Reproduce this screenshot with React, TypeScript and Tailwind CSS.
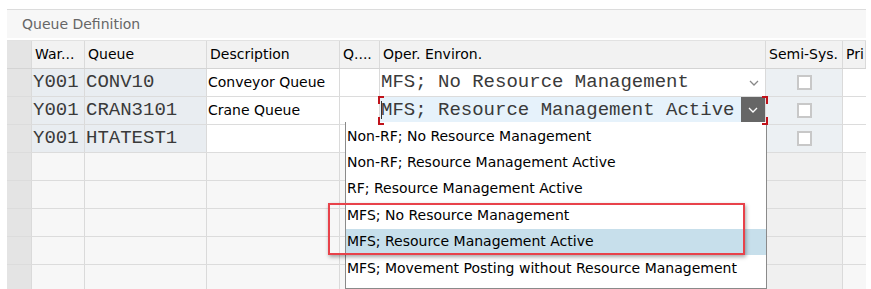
import React from "react";

const sans = "font-['DejaVu_Sans',Tahoma,sans-serif]";
const mono = "font-['Liberation_Mono','Courier_New',monospace]";

/* column widths, left to right: selector, War., Queue, Description, Q., Oper. Environ., Semi-Sys., Pri */
const cols = ["w-[25px]", "w-[53px]", "w-[122px]", "w-[133px]", "w-[40px]", "w-[386px]", "w-[77px]", "flex-1"];

type Row = { war?: string; queue?: string; desc?: string; env?: "plain" | "focus" | "blank"; check?: boolean };

const rows: Row[] = [
  { war: "Y001", queue: "CONV10", desc: "Conveyor Queue", env: "plain", check: true },
  { war: "Y001", queue: "CRAN3101", desc: "Crane Queue", env: "focus", check: true },
  { war: "Y001", queue: "HTATEST1", env: "blank", check: true },
  {}, {}, {}, {}, {},
];

const options = [
  "Non-RF; No Resource Management",
  "Non-RF; Resource Management Active",
  "RF; Resource Management Active",
  "MFS; No Resource Management",
  "MFS; Resource Management Active",
  "MFS; Movement Posting without Resource Management",
];

function Chevron({ className }: { className?: string }) {
  return (
    <svg width="10" height="6" viewBox="0 0 10 6" className={className}>
      <path d="M1 1 L5 5 L9 1" fill="none" stroke="currentColor" strokeWidth="1.3" />
    </svg>
  );
}

function Check() {
  return <div className="h-[15px] w-[15px] border-2 border-[#c8c8c8] bg-white" />;
}

function Cell({ i, className = "", children }: { i: number; className?: string; children?: React.ReactNode }) {
  return <div className={`${cols[i]} shrink-0 h-full border-r border-[#dadada] ${className}`}>{children}</div>;
}

export default function App() {
  return (
    <div className={`relative h-[289px] w-[871px] overflow-hidden bg-white ${sans}`}>
      <div className="ml-[7px] mt-[9px] w-[859px] border-t border-[#dcdcdc]">
        {/* panel title */}
        <div className="flex h-[28px] items-center bg-[#f7f7f7] pl-[15px] text-[14px] text-[#666]">Queue Definition</div>

        <div className="mt-[2px] border-t border-[#e2e2e2]">
          {/* header */}
          <div className="flex h-[28px] border-b border-[#d4d4d4] bg-[#f2f2f2] text-[14px] text-black">
            <Cell i={0} className="bg-[#e4e4e4]" />
            {["War...", "Queue", "Description", "Q....", "Oper. Environ.", "Semi-Sys.", "Pri"].map((h, k) => (
              <Cell key={h} i={k + 1} className="flex items-center overflow-hidden whitespace-nowrap pl-[3px]">{h}</Cell>
            ))}
          </div>

          {rows.map((r, idx) => {
            const filled = !!r.war;
            const key = filled ? "bg-[#e9edf1]" : "bg-[#f7f7f7]";
            const plain = filled ? "bg-white" : "bg-[#f7f7f7]";
            return (
              <div key={idx} className="flex h-[28px] border-b border-[#dcdcdc] text-[14px]">
                <Cell i={0} className="bg-[#e4e4e4]" />
                <Cell i={1} className={`${key} ${mono} flex items-center pl-[1px] text-[19px] text-[#3a3a3a]`}>{r.war}</Cell>
                <Cell i={2} className={`${key} ${mono} flex items-center pl-[1px] text-[19px] text-[#3a3a3a]`}>{r.queue}</Cell>
                <Cell i={3} className={`${plain} flex items-center pl-[1px] text-black`}>{r.desc}</Cell>
                <Cell i={4} className={plain} />
                <Cell i={5} className={`${plain} relative`}>
                  {r.env === "plain" && (
                    <div className={`flex h-full items-center justify-between pl-[1px] pr-[6px] ${mono} text-[19px] text-[#3a3a3a]`}>
                      <span>MFS; No Resource Management</span>
                      <Chevron className="text-[#888]" />
                    </div>
                  )}
                  {r.env === "focus" && (
                    <>
                      <div className={`flex h-[26px] items-center bg-[#e6f2fb] pl-[1px] ${mono} text-[19px] text-[#3a3a3a]`}>
                        <span className="mr-[1px] h-[18px] w-[1px] bg-[#333]" />
                        <span className="-ml-[2px]">MFS; Resource Management Active</span>
                        <div className="ml-auto flex h-[26px] w-[24px] items-center justify-center bg-[#666] text-white">
                          <Chevron />
                        </div>
                      </div>
                      {/* focus brackets */}
                      <div className="absolute z-10 -left-[2px] -top-[1px] h-[8px] w-[6px] border-l-2 border-t-2 border-[#c0131b]" />
                      <div className="absolute z-10 -left-[2px] -bottom-[1px] h-[8px] w-[6px] border-b-2 border-l-2 border-[#c0131b]" />
                      <div className="absolute z-10 -right-[3px] -top-[1px] h-[8px] w-[6px] border-r-2 border-t-2 border-[#c0131b]" />
                      <div className="absolute z-10 -right-[3px] -bottom-[1px] h-[8px] w-[6px] border-b-2 border-r-2 border-[#c0131b]" />
                    </>
                  )}
                </Cell>
                <Cell i={6} className={`${filled ? "bg-[#ecf0f3]" : "bg-[#f0f0f0]"} flex items-center justify-center`}>
                  {r.check && <Check />}
                </Cell>
                <Cell i={7} className={`${plain} border-r-0`} />
              </div>
            );
          })}
        </div>
      </div>

      {/* dropdown list */}
      <div className="absolute left-[345px] top-[122px] bottom-0 w-[422px] border border-t-0 border-[#8a8a8a] bg-white pt-[1px] text-[14px] text-black">
        {options.map((o, k) => (
          <div key={o} className={`flex h-[26.4px] items-center whitespace-nowrap pl-[1px] ${k === 4 ? "bg-[#c7dfeb]" : ""}`}>
            {o}
          </div>
        ))}
      </div>

      {/* highlight frame */}
      <div className="absolute left-[328px] top-[203px] h-[52px] w-[417px] border-2 border-[#e8424a] shadow-[1px_2px_4px_rgba(0,0,0,0.35)]" />
    </div>
  );
}
